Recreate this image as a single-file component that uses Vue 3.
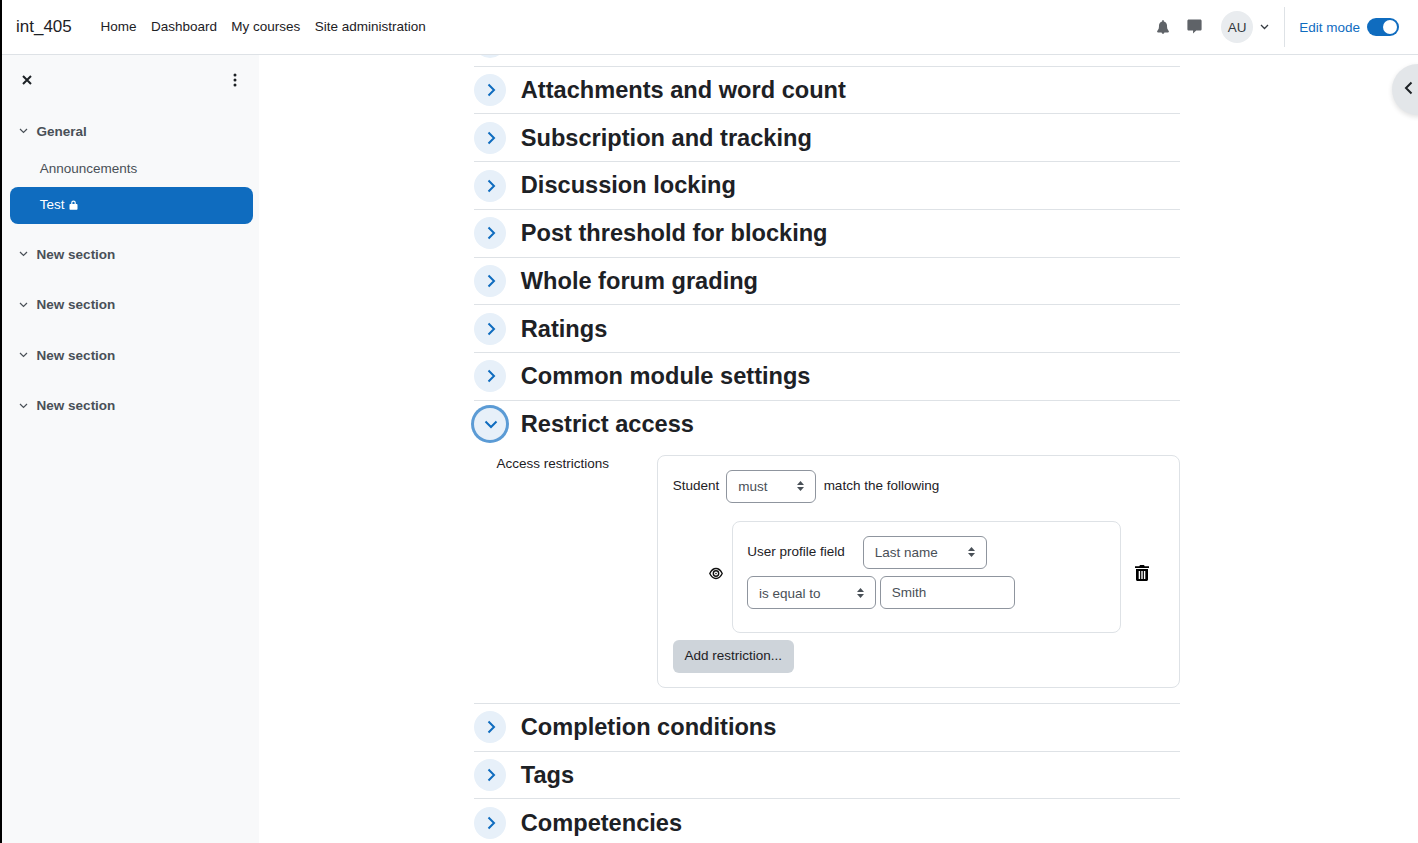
<script setup>
const before = ['Attachments and word count','Subscription and tracking','Discussion locking','Post threshold for blocking','Whole forum grading','Ratings','Common module settings']
const after = ['Completion conditions','Tags','Competencies']
const sections = ['New section','New section','New section','New section']
</script>

<template>
  <div class="page">
    <header class="nav">
      <span class="brand">int_405</span>
      <nav class="links">
        <a>Home</a><a>Dashboard</a><a>My courses</a><a>Site administration</a>
      </nav>
      <div class="tools">
        <svg class="bell" width="12" height="14" viewBox="0 0 14 15" preserveAspectRatio="none"><path fill="#5f6368" d="M7 0c-.6 0-1 .4-1 1v.7C3.800 2.100 2.300 4 2.300 6.200v1.100c0 1.400-.5 2.700-1.400 3.800l-.6.7c-.5.600-.1 1.500.7 1.500h11.999c.8 0 1.200-.9.7-1.500l-.6-.7c-.9-1.100-1.400-2.400-1.400-3.800V6.200C11.700 4 10.200 2.100 8 1.700V1c0-.6-.4-1-1-1zM5.400 13.300c.1.800.8 1.500 1.600 1.500s1.500-.7 1.600-1.500z"/></svg>
        <svg class="chat" width="15" height="15" viewBox="0 0 15 15"><path fill="#5f6368" d="M1.800.6h11.400c.8 0 1.400.6 1.400 1.400v8.200c0 .8-.6 1.400-1.400 1.400H9.200L6 14.600l.1-3H1.800c-.8 0-1.400-.6-1.400-1.400V2C.4 1.200 1 .6 1.800.6z"/></svg>
        <span class="avatar">AU</span>
        <svg class="caret" width="9" height="6" viewBox="0 0 9 6"><path d="M1 1l3.500 3.500L8 1" fill="none" stroke="#343a40" stroke-width="1.300"/></svg>
        <span class="divider"></span>
        <span class="edit">Edit mode</span>
        <span class="toggle"><span class="knob"></span></span>
      </div>
    </header>

    <div class="body">
      <aside class="side">
        <div class="side-top">
          <svg width="10" height="10" viewBox="0 0 10 10"><path d="M1 1l8 8M9 1l-8 8" stroke="#1d2125" stroke-width="2" fill="none"/></svg>
          <svg width="4" height="14" viewBox="0 0 4 14"><circle cx="2" cy="2" r="1.500" fill="#1d2125"/><circle cx="2" cy="7" r="1.500" fill="#1d2125"/><circle cx="2" cy="12" r="1.500" fill="#1d2125"/></svg>
        </div>
        <div class="sec first">
          <svg width="9" height="6" viewBox="0 0 9 6"><path d="M1 1l3.500 3.500L8 1" fill="none" stroke="#495057" stroke-width="1.200"/></svg>
          <span>General</span>
        </div>
        <div class="item">Announcements</div>
        <div class="item active">
          <span>Test</span>
          <svg width="9" height="10" viewBox="0 0 9 10"><path fill="#fff" d="M2.200 4V2.800a2.300 2.300 0 0 1 4.600 0V4h.7c.6 0 1 .4 1 1v3.800c0 .6-.4 1-1 1h-6c-.6 0-1-.4-1-1V5c0-.6.4-1 1-1zm1.200 0h2.200V2.800a1.100 1.100 0 0 0-2.200 0z"/></svg>
        </div>
        <div v-for="(s, i) in sections" :key="i" class="sec">
          <svg width="9" height="6" viewBox="0 0 9 6"><path d="M1 1l3.500 3.500L8 1" fill="none" stroke="#495057" stroke-width="1.200"/></svg>
          <span>{{ s }}</span>
        </div>
      </aside>

      <main class="main">
        <div class="column">
          <div class="row ghost"><span class="circle"></span></div>
          <div v-for="t in before" :key="t" class="row">
            <span class="circle"><svg class="closed" width="9" height="14" viewBox="0 0 9 14"><path d="M1.500 1.500L7 7l-5.500 5.500" fill="none" stroke="#0f6cbf" stroke-width="2"/></svg></span>
            <h3>{{ t }}</h3>
          </div>
          <div class="row open">
            <span class="circle focus"><svg class="opened" width="14" height="9" viewBox="0 0 14 9"><path d="M1.500 1.500L7 7l5.500-5.500" fill="none" stroke="#0f6cbf" stroke-width="2"/></svg></span>
            <h3>Restrict access</h3>
          </div>
          <div class="form">
            <div class="form-label">Access restrictions</div>
            <div class="box">
              <div class="line">
                <span class="lift">Student</span>
                <span class="select must">must<svg class="updown" width="7" height="10" viewBox="0 0 7 10"><path fill="#495057" d="M3.500 0L7 4H0zM3.500 10L0 6h7z"/></svg></span>
                <span class="lift match">match the following</span>
              </div>
              <div class="rule">
                <svg class="eye" width="14" height="13" viewBox="0 0 14 13"><path fill="none" stroke="#111" stroke-width="1.400" d="M.8 6.500C2.300 3.300 4.400 1.500 7 1.500s4.700 1.800 6.200 5c-1.500 3.200-3.600 5-6.200 5s-4.700-1.800-6.200-5z"/><circle cx="7" cy="6.500" r="2.700" fill="none" stroke="#111" stroke-width="1.400"/><circle cx="7" cy="6.500" r=".8" fill="#111"/></svg>
                <div class="card">
                  <div class="card-line one">
                    <span class="field-label">User profile field</span>
                    <span class="select last">Last name<svg class="updown" width="7" height="10" viewBox="0 0 7 10"><path fill="#495057" d="M3.500 0L7 4H0zM3.500 10L0 6h7z"/></svg></span>
                  </div>
                  <div class="card-line two">
                    <span class="select equal">is equal to<svg class="updown" width="7" height="10" viewBox="0 0 7 10"><path fill="#495057" d="M3.500 0L7 4H0zM3.500 10L0 6h7z"/></svg></span>
                    <span class="input">Smith</span>
                  </div>
                </div>
                <svg class="trash" width="14" height="16" viewBox="0 0 14 16"><path fill="#000" fill-rule="evenodd" d="M5 0h4l.7 1.300H14v1.800H0V1.300h4.300zM1 4h12v10.500c0 .8-.7 1.500-1.500 1.500h-9C1.700 16 1 15.300 1 14.500zm2.700 2v8h1.400V6zm2.600 0v8h1.400V6zm2.600 0v8h1.400V6z"/></svg>
              </div>
              <span class="add">Add restriction...</span>
            </div>
          </div>
          <div v-for="t in after" :key="t" class="row">
            <span class="circle"><svg class="closed" width="9" height="14" viewBox="0 0 9 14"><path d="M1.500 1.500L7 7l-5.500 5.500" fill="none" stroke="#0f6cbf" stroke-width="2"/></svg></span>
            <h3>{{ t }}</h3>
          </div>
        </div>
        <span class="drawer"><svg width="9" height="14" viewBox="0 0 9 14"><path d="M7.500 1.500L2 7l5.500 5.500" fill="none" stroke="#1d2125" stroke-width="2"/></svg></span>
      </main>
    </div>
  </div>
</template>

<style>
html, body { margin: 0; overflow: hidden; background: #fff; }
</style>

<style scoped>
.page {
  height: 843px;
  width: 1418px;
  box-sizing: border-box;
  border-left: 2px solid #000;
  display: flex;
  flex-direction: column;
  overflow: hidden;
  font-family: "Liberation Sans", Arial, sans-serif;
  font-size: 13.5px;
  color: #1d2125;
  background: #fff;
}
.nav {
  height: 54px;
  flex: none;
  display: flex;
  align-items: center;
  padding-left: 14px;
  border-bottom: 1px solid #dee2e6;
  background: #fff;
  position: relative;
  z-index: 2;
}
.brand { font-size: 17px; width: 84.5px; }
.links { display: flex; gap: 14.4px; margin-top: -2px; }
.tools { margin-left: auto; display: flex; align-items: center; }
.bell { margin-right: 18px; }
.chat { margin-right: 19px; margin-top: -2px; }
.avatar {
  width: 32px; height: 32px; border-radius: 50%;
  background: #e9ecef; color: #343a40;
  display: flex; align-items: center; justify-content: center;
}
.caret { margin-left: 7px; margin-right: 15px; }
.divider { width: 1px; height: 40px; background: #dee2e6; }
.edit { color: #0f6cbf; margin-left: 14px; margin-right: 7px; }
.toggle {
  width: 32px; height: 18px; border-radius: 9px;
  background: #0f6cbf; margin-right: 19px; position: relative;
}
.knob {
  position: absolute; right: 2px; top: 2px;
  width: 14px; height: 14px; border-radius: 50%; background: #fff;
}
.body { flex: 1; display: flex; min-height: 0; }
.side {
  width: 257px; flex: none; background: #f8f9fa;
  color: #495057;
}
.side-top {
  display: flex; justify-content: space-between; align-items: center;
  padding: 0 22px 0 20px; height: 50px;
}
.sec {
  display: flex; align-items: center; font-weight: 700;
  height: 20px; margin-top: 30.4px; padding-left: 17px; gap: 8.6px;
}
.sec.first { margin-top: 16px; }
.item { height: 37px; line-height: 35px; margin: 0 6px 0 8px; padding-left: 29.7px; }
.sec.first + .item { margin-top: 10px; height: 36px; }
.item.active {
  background: #0f6cbf; color: #fff; border-radius: 8px;
  display: flex; align-items: center; gap: 5px;
  margin-bottom: -10px;
  padding-bottom: 2px;
  box-sizing: border-box;
}
.main { flex: 1; position: relative; overflow: hidden; }
.column { width: 706px; margin-left: 215px; margin-top: -37.02px; }
.row {
  height: 47.72px; box-sizing: border-box;
  border-top: 1px solid #dee2e6;
  display: flex; align-items: center; gap: 14.8px;
}
.row h3 { margin: 0; font-size: 23.6px; font-weight: 700; line-height: 1.2; color: #1d2125; }
.circle {
  width: 32px; height: 32px; border-radius: 50%;
  background: #e7f0f9; flex: none;
  display: flex; align-items: center; justify-content: center;
}
.closed { margin-left: 3px; }
.opened { margin-left: 2px; }
.circle.focus { box-shadow: 0 0 0 3px #5b9bd5; }
.form { display: flex; padding-top: 7.5px; padding-bottom: 15px; }
.form-label { width: 160px; padding-left: 22.6px; box-sizing: border-box; margin-right: 23px; padding-top: 1px; line-height: 16px; }
.box {
  width: 523px; height: 233px; box-sizing: border-box;
  border: 1px solid #dee2e6; border-radius: 8px;
  padding: 14px 14.7px;
}
.line { display: flex; align-items: center; gap: 7px; height: 33px; }
.lift { margin-top: -2px; }
.match { margin-left: .4px; }
.select {
  height: 33px; box-sizing: border-box;
  border: 1px solid #8f959e; border-radius: 6px;
  display: inline-flex; align-items: center; justify-content: space-between;
  padding: 0 11px; color: #495057; background: #fff; flex: none;
}
.must { width: 90px; }
.last { width: 124px; }
.equal { width: 129px; height: 33px; padding: 2px 11px 0 11.4px; margin-top: -1px; }
.rule { display: flex; align-items: center; margin-top: 18px; height: 112px; }
.eye { margin-left: 36px; margin-right: 9px; margin-top: -7px; }
.card {
  width: 389px; height: 112px; box-sizing: border-box;
  border: 1px solid #dee2e6; border-radius: 8px;
  padding: 14px 14px;
}
.card-line { display: flex; align-items: flex-start; }
.field-label { width: 116px; padding-top: 8px; padding-left: .5px; box-sizing: border-box; }
.two { margin-top: 8px; gap: 4px; }
.input {
  width: 135px; height: 33px; box-sizing: border-box;
  border: 1px solid #8f959e; border-radius: 6px;
  margin-top: -1px; padding: 8px 11px; color: #495057;
}
.trash { margin-left: 14px; margin-top: -7px; }
.add {
  display: inline-flex; align-items: center; justify-content: center;
  width: 121px; height: 33px; margin-top: 7px; padding-bottom: 1px; box-sizing: border-box;
  background: #ced4da; border-radius: 6px; color: #1d2125;
}
.drawer {
  position: absolute; left: 1133px; top: 9px;
  width: 51px; height: 51px; border-radius: 50%;
  background: #e3e6e9;
  display: flex; align-items: center; padding: 0 0 4px 12px; box-sizing: border-box;
  box-shadow: 0 2px 5px rgba(0,0,0,.12);
}
</style>
